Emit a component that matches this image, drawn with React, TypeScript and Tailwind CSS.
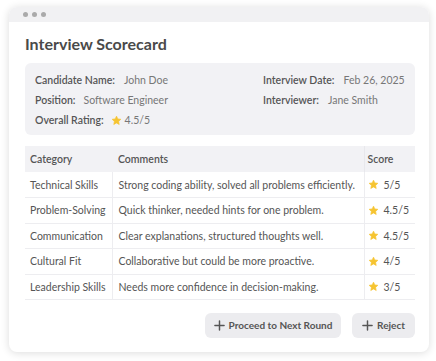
import React from 'react'

type Row = {
  category: string
  comment: string
  score: string
}

const ROWS: Row[] = [
  { category: 'Technical Skills', comment: 'Strong coding ability, solved all problems efficiently.', score: '5/5' },
  { category: 'Problem-Solving', comment: 'Quick thinker, needed hints for one problem.', score: '4.5/5' },
  { category: 'Communication', comment: 'Clear explanations, structured thoughts well.', score: '4.5/5' },
  { category: 'Cultural Fit', comment: 'Collaborative but could be more proactive.', score: '4/5' },
  { category: 'Leadership Skills', comment: 'Needs more confidence in decision-making.', score: '3/5' },
]

function Star(): React.ReactElement {
  return (
    <svg width="11" height="11" viewBox="0 0 24 24" className="shrink-0">
      <path
        d="M12 2.5l2.9 6.1 6.6.8-4.9 4.6 1.3 6.6L12 17.3l-5.9 3.3 1.3-6.6-4.9-4.6 6.6-.8z"
        fill="#f6c431"
        stroke="#f6c431"
        strokeWidth="1.5"
        strokeLinejoin="round"
      />
    </svg>
  )
}

function Plus(): React.ReactElement {
  return (
    <svg width="11" height="11" viewBox="0 0 12 12" className="shrink-0">
      <path d="M6 1v10M1 6h10" stroke="#555" strokeWidth="1.6" strokeLinecap="round" />
    </svg>
  )
}

function Field({ label, value, gap }: { label: string; value: React.ReactNode; gap: string }): React.ReactElement {
  return (
    <div className={`flex items-center ${gap}`}>
      <span className="font-semibold text-[#555]">{label}</span>
      <span className="text-[#777]">{value}</span>
    </div>
  )
}

export default function App(): React.ReactElement {
  return (
    <div className="w-[436px] h-[361px] bg-white pt-[7px] pl-[9px]" style={{ fontFamily: 'Lato, "Liberation Sans", sans-serif' }}>
      <div className="w-[420px] h-[345px] rounded-lg bg-white overflow-hidden shadow-[0_1px_8px_rgba(0,0,0,0.14)] flex flex-col">
        {/* 창 상단 바 */}
        <div className="h-[15px] bg-[#f1f1f3] flex items-center gap-[4px] pl-[14px]">
          <span className="w-[5px] h-[5px] rounded-full bg-[#aaa]" />
          <span className="w-[5px] h-[5px] rounded-full bg-[#aaa]" />
          <span className="w-[5px] h-[5px] rounded-full bg-[#aaa]" />
        </div>

        <div className="pl-4 pr-[14px] flex flex-col">
          <h1 className="mt-[12px] text-[16px] font-bold text-[#4a4a4a] leading-[19px]">Interview Scorecard</h1>

          {/* 후보자 정보 */}
          <div className="mt-[10px] h-[72px] rounded-md bg-[#f2f2f5] px-[10px] pt-[10px] text-[10.5px] leading-[14px] flex justify-between">
            <div className="flex flex-col gap-[6px]">
              <Field label="Candidate Name:" value="John Doe" gap="gap-[9px]" />
              <Field label="Position:" value="Software Engineer" gap="gap-[8px]" />
              <Field
                label="Overall Rating:"
                gap="gap-[7px]"
                value={<span className="flex items-center gap-[3px]"><Star />4.5/5</span>}
              />
            </div>
            <div className="flex flex-col gap-[6px] w-[142px]">
              <Field label="Interview Date:" value="Feb 26, 2025" gap="gap-[9px]" />
              <Field label="Interviewer:" value="Jane Smith" gap="gap-[9px]" />
            </div>
          </div>

          {/* 평가 표 */}
          <table className="mt-[11px] w-full border-collapse text-[10.5px] text-[#555] leading-[14px]">
            <thead>
              <tr className="bg-[#f2f2f5] h-[26px]">
                <th className="w-[87px] text-left font-semibold pl-[5px]">Category</th>
                <th className="w-[252px] text-left font-semibold pl-[6px] border-r border-[#e8e8ec]">Comments</th>
                <th className="text-left font-semibold pl-[3px]">Score</th>
              </tr>
            </thead>
            <tbody>
              {ROWS.map(r => (
                <tr key={r.category} className="h-[25.5px] border-b border-[#ededf0]">
                  <td className="pl-[5px] border-r border-[#ededf0] whitespace-nowrap">{r.category}</td>
                  <td className="pl-[6px] border-r border-[#ededf0] whitespace-nowrap">{r.comment}</td>
                  <td className="pl-[3px]">
                    <span className="flex items-center gap-[5px]"><Star />{r.score}</span>
                  </td>
                </tr>
              ))}
            </tbody>
          </table>

          {/* 버튼 */}
          <div className="mt-[13px] flex justify-end gap-[11px]">
            <button className="h-[25px] w-[136px] justify-center rounded-md bg-[#ececef] flex items-center gap-[4px] text-[10px] font-bold text-[#555]">
              <Plus />Proceed to Next Round
            </button>
            <button className="h-[25px] w-[63px] justify-center rounded-md bg-[#ececef] flex items-center gap-[4px] text-[10px] font-bold text-[#555]">
              <Plus />Reject
            </button>
          </div>
        </div>
      </div>
    </div>
  )
}
